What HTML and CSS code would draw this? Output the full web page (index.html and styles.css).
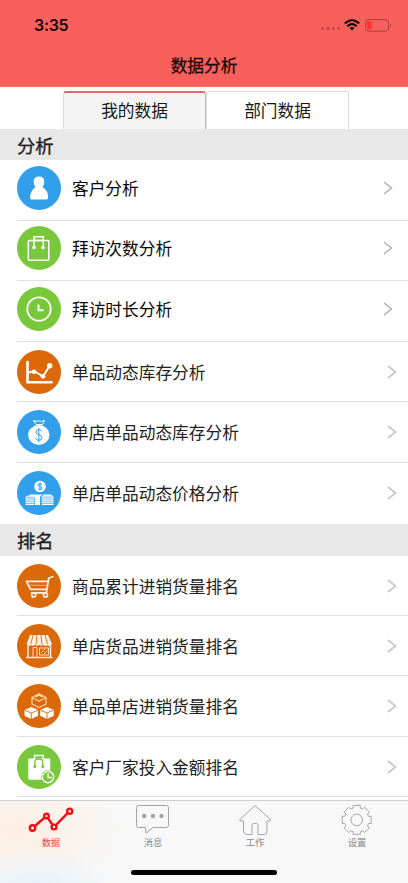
FILE: index.html
```html
<!DOCTYPE html>
<html lang="zh-CN">
<head>
<meta charset="utf-8">
<meta name="viewport" content="width=device-width, initial-scale=1">
<title>数据分析</title>
<link rel="stylesheet" href="styles.css">
</head>
<body>
<div class="app">
  <header class="header">
    <div class="status">
      <span class="time">3:35</span>
      <span class="signal"><i></i><i></i><i></i><i></i></span>
      <svg class="wifi" viewBox="0 0 16 12"><g fill="none" stroke="#180808" stroke-width="2.200"><path d="M.8 4.4Q8-2 15.2 4.4"/><path d="M3.300 7.200Q8 3 12.700 7.200"/></g><path d="M5.400 9Q8 7 10.600 9L8 11.600Z" fill="#180808"/></svg>
      <svg class="battery" viewBox="0 0 27 13"><rect x=".6" y=".6" width="23" height="11.6" rx="3.2" fill="none" stroke="#a94040"/><rect x="2.2" y="2.2" width="4.3" height="8.4" rx="1.4" fill="#ff3330"/><path d="M25 4.4q2 2 0 4z" fill="#a94040"/></svg>
    </div>
    <h1 class="title">数据分析</h1>
  </header>
  <nav class="tabs">
    <a class="tab tab-active">我的数据</a>
    <a class="tab">部门数据</a>
  </nav>
  <main class="content">
    <h2 class="section">分析</h2>
    <ul class="list">
      <li class="row row-high"><svg class="icon blue" viewBox="0 0 44 44"><path d="M22 10.500c3.500 0 5.200 1.700 5.200 5 0 2.600-.5 4.300-1.800 5.500 3 1.800 5.200 4.500 5.600 8.500.2 2.500 0 4-1.500 4h-15c-1.500 0-1.500-2-1.200-4 .6-4 2.700-6.700 5.400-8.500-1.500-1.200-2-3-2-5.500 0-3.300 1.800-5 5.300-5z" fill="#fff"/></svg><span class="label">客户分析</span><svg class="chevron" viewBox="0 0 10 14"><path d="M1 1l7.500 6L1 13"/></svg></li>
      <li class="row row-high"><svg class="icon green" viewBox="0 0 44 44"><g fill="none" stroke="#fff" stroke-width="1.500"><rect x="11.300" y="14.500" width="20.500" height="19.700" rx="1"/><path d="M17 21v-10.200h9.300V21M17 14.500h9.300"/></g><circle cx="17" cy="21.500" r="1.800" fill="#fff"/><circle cx="26" cy="21.500" r="1.800" fill="#fff"/></svg><span class="label">拜访次数分析</span><svg class="chevron" viewBox="0 0 10 14"><path d="M1 1l7.500 6L1 13"/></svg></li>
      <li class="row row-high"><svg class="icon green" viewBox="0 0 44 44"><g fill="none" stroke="#fff"><circle cx="22" cy="22" r="11.700" stroke-width="1.800"/><path d="M21.500 17.500v5.700H26.500" stroke-width="1.900"/></g></svg><span class="label">拜访时长分析</span><svg class="chevron" viewBox="0 0 10 14"><path d="M1 1l7.500 6L1 13"/></svg></li>
      <li class="row"><svg class="icon orange" viewBox="0 0 44 44"><g fill="none" stroke="#fff" stroke-width="2.600" stroke-linecap="round"><path d="M10.500 12v20.300H34.500"/><path d="M12 22.500l5-1.500 9 5.500L32.500 16" stroke-width="2"/></g><circle cx="17" cy="21.700" r="2.200" fill="#fff"/><circle cx="26" cy="26.300" r="2.400" fill="#fff"/><circle cx="32.700" cy="15.800" r="2.700" fill="#fff"/></svg><span class="label">单品动态库存分析</span><svg class="chevron soft" viewBox="0 0 10 14"><path d="M1 1l7.500 6L1 13"/></svg></li>
      <li class="row"><svg class="icon blue" viewBox="0 0 44 44"><ellipse cx="21.800" cy="25" rx="10.700" ry="10" fill="#fff"/><path d="M16.500 10.500l2.500 4h6.500l2-4q-2.500 1.500-5.500.5-3 1-5.500-.5z" fill="none" stroke="#fff"/><path d="M24.800 21.300q-1-1.700-3-1.700-3 0-3 2.500 0 2 3 2.700 3.200.7 3.200 3 0 2.500-3.200 2.500-2.500 0-3.300-2M21.800 18.200v14" fill="none" stroke="#319fea" stroke-width="1"/></svg><span class="label">单店单品动态库存分析</span><svg class="chevron soft" viewBox="0 0 10 14"><path d="M1 1l7.500 6L1 13"/></svg></li>
      <li class="row"><svg class="icon blue" viewBox="0 0 44 44"><circle cx="23" cy="15.500" r="5.800" fill="#fff"/><path d="M25 13.700q-.8-1-2-1-2 0-2 1.300t2 1.500q2 .3 2 1.700t-2 1.300q-1.500 0-2.200-1M23 11.500v8" fill="none" stroke="#319fea"/><path d="M8.500 26l5-2.600h7.500l-3.200 3V34h-9.300zM17.800 26.400q1-3 5-3h3.200q-3 1-3 3.500V34h-5.200zM26.500 23.400h7.500l2.600 2.600v8H24.500v-7q0-2 2-3.600z" fill="#fff"/><path d="M8 28h9.500M8 30.200h9.500M8 32.400h9.500M24.500 28H37M24.500 30.200H37M24.500 32.400H37M10 26.300l7-.1M25.500 26h10M17.600 26.500V34M24 26.500V34" fill="none" stroke="#319fea" stroke-width=".7"/></svg><span class="label">单店单品动态价格分析</span><svg class="chevron soft" viewBox="0 0 10 14"><path d="M1 1l7.500 6L1 13"/></svg></li>
    </ul>
    <h2 class="section">排名</h2>
    <ul class="list rank">
      <li class="row"><svg class="icon orange" viewBox="0 0 44 44"><g fill="none" stroke="#fff1e2" stroke-width="1.700" stroke-linejoin="round" stroke-linecap="round"><path d="M30.800 17.300H9.500L13.500 25.300H30M35.800 12.800l-4 1.200-2.500 14.800H14.500"/><path d="M12 21.300h18" stroke-width=".9" opacity=".6"/><circle cx="16.700" cy="31" r="2"/><circle cx="28.500" cy="31" r="2"/></g></svg><span class="label">商品累计进销货量排名</span><svg class="chevron soft" viewBox="0 0 10 14"><path d="M1 1l7.500 6L1 13"/></svg></li>
      <li class="row"><svg class="icon orange" viewBox="0 0 44 44"><path d="M13 11h18l3.800 8.500q0 2.500-2.500 2.500-1.500 0-2.200-1-2 2-4-.2-2 2-4 0-2 2-4 0-2 2-4 .2-1 1-2.300 1-2 0-2-2.500z" fill="#fff1e2"/><path d="M16.200 11l-2.500 9M20 11l-1 9.500M24 11l1 9.500M28 11l2.500 9" stroke="#dc6909" stroke-width=".9"/><path d="M11 22v11M33.500 22v11M9 33.500h26.500" fill="none" stroke="#ffe8d2" stroke-width="1.500"/><path d="M16 33v-9.500h4V33M22.500 24h9v7h-9zM24 29l4-4M27 30l3.500-3.500" fill="none" stroke="#ffdbb8" stroke-width="1"/></svg><span class="label">单店货品进销货量排名</span><svg class="chevron soft" viewBox="0 0 10 14"><path d="M1 1l7.500 6L1 13"/></svg></li>
      <li class="row"><svg class="icon orange" viewBox="0 0 44 44"><path d="M15 13.500L22 9.800l7 3.700V20L22 23.500 15 20zM15 13.500L22 17.300l7-3.800M18.500 13l3.500-1.800 3.500 1.800" fill="none" stroke="#ffd5a9" stroke-width="1.300" stroke-linejoin="round"/><path d="M7.500 26l6.800-3 6.800 3v5.700l-6.800 3.300-6.800-3.300zM23.200 26l6.800-3 6.800 3v5.700L30 35l-6.800-3.300z" fill="#fff"/><path d="M8 26.300l6.300 2.700 6.300-2.700M14.300 29v6M23.700 26.300L30 29l6.300-2.700M30 29v6" fill="none" stroke="#dc6909" stroke-width=".9"/></svg><span class="label">单品单店进销货量排名</span><svg class="chevron soft" viewBox="0 0 10 14"><path d="M1 1l7.500 6L1 13"/></svg></li>
      <li class="row"><svg class="icon green" viewBox="0 0 44 44"><path d="M12.500 13.500H32q1.300 0 1.300 1.300v20h-20.500q-1.500 0-1.500-1.500V14.800q0-1.300 1.200-1.300z" fill="#fff"/><path d="M17.500 14v-3.500h8.700V14" fill="none" stroke="#fff" stroke-width="1.400"/><path d="M17.800 21v-4q0-3 4-3t4 3v4" fill="none" stroke="#79c83b" stroke-width="1.400"/><circle cx="17.800" cy="21.500" r="1.600" fill="#79c83b"/><circle cx="25.800" cy="21.500" r="1.600" fill="#79c83b"/><circle cx="31" cy="32" r="7" fill="#79c83b"/><circle cx="31" cy="32" r="5.700" fill="none" stroke="#fff" stroke-width="1.400"/><path d="M31 28V32.500h4" fill="none" stroke="#fff" stroke-width="1.300"/></svg><span class="label">客户厂家投入金额排名</span><svg class="chevron soft" viewBox="0 0 10 14"><path d="M1 1l7.500 6L1 13"/></svg></li>
    </ul>
  </main>
  <footer class="footer">
    <nav class="bar">
      <a class="item item-active"><svg class="glyph" viewBox="0 0 46 32"><g fill="#fff" stroke="#f50d15" stroke-width="2.400"><path d="M4.500 24L18.500 12 26 23 41.500 7.200" fill="none"/><circle cx="4.500" cy="24" r="2.700"/><circle cx="18.500" cy="12" r="2.300"/><circle cx="26" cy="23" r="2.400"/><circle cx="41.700" cy="7.200" r="2.500"/></g></svg><span>数据</span></a>
      <a class="item"><svg class="glyph" viewBox="0 0 46 32"><path d="M8.500 1.500h28q2 0 2 2V21.500q0 2-2 2H23l-7 5.800-.5-5.800h-7q-2 0-2-2v-18q0-2 2-2z"/><g class="dots"><circle cx="14.200" cy="12" r="2.200"/><circle cx="23" cy="12" r="2.200"/><circle cx="31.500" cy="12" r="2.200"/></g></svg><span>消息</span></a>
      <a class="item"><svg class="glyph" viewBox="0 0 46 32"><path d="M23 1.500L38 15q1.500 2-.8 2H35v10.500q0 3-2.800 3H26v-9.500q0-1.500-1.500-1.500h-3q-1.500 0-1.500 1.500v9.500h-5q-3.500 0-3.500-3.500V17H9q-2.200 0-1-1.500z"/></svg><span>工作</span></a>
      <a class="item"><svg class="glyph" viewBox="0 0 46 32"><g transform="translate(22.700 15.900)"><path d="M-3.600-14.500H3.600V-11.800L5.800-10.900 8-12.600 12.600-8 10.900-5.800 11.800-3.600H14.500V3.600H11.800L10.900 5.800 12.600 8 8 12.600 5.800 10.900 3.600 11.800V14.500H-3.600V11.800L-5.800 10.900-8 12.600-12.600 8-10.900 5.800-11.800 3.600H-14.500V-3.600H-11.800L-10.900-5.800-12.600-8-8-12.600-5.800-10.900-3.600-11.800Z"/><circle r="5.800"/></g></svg><span>设置</span></a>
    </nav>
    <div class="home"></div>
  </footer>
</div>
</body>
</html>
```
FILE: styles.css
```css
* { box-sizing: border-box; }
body { margin: 0; font-family: "Noto Sans CJK SC", sans-serif; color: #222; background: #fff; }
h1, h2, ul { margin: 0; padding: 0; list-style: none; }
svg { display: block; flex: none; }
.app { width: 408px; height: 883px; display: flex; flex-direction: column; overflow: hidden; }
.header { height: 87px; flex: none; background: #f95f5b; border-bottom: 1px solid #f2726e; }
.status { height: 50px; display: flex; align-items: center; padding: 0 17px 0 34px; }
.time { font: 600 16px/20px Inter, sans-serif; letter-spacing: -.3px; color: #180808; margin-right: auto; }
.signal { display: flex; gap: 2px; margin: 7px 4px 0 0; }
.signal i { width: 3.200px; height: 3.200px; border-radius: 1px; background: #c84c49; }
.wifi { width: 16px; height: 12px; margin-right: 5px; }
.battery { width: 27px; height: 13px; margin-right: -1px; }
.title { font-size: 16.700px; line-height: 30px; font-weight: 400; -webkit-text-stroke: .3px; color: #180808; text-align: center; }
.tabs { height: 41.500px; flex: none; display: flex; justify-content: center; padding: 4px 0 0 4px; }
.tab { width: 143px; border: 1px solid #dadada; border-bottom: 0; border-radius: 3px 3px 0 0; text-align: center; font-size: 16.700px; line-height: 36px; color: #161616; }
.tab-active { background: #f4f4f4; border-top: 2px solid #dd6c6b; line-height: 35px; border-right-color: #c9b9b9; }
.content { flex: 1; min-height: 0; overflow: hidden; }
.section { height: 31.500px; background: #e8e8e8; padding-left: 17px; font-size: 18.300px; line-height: 32px; font-weight: 400; -webkit-text-stroke: .35px; }
.list { height: 364px; padding-left: 17px; }
.row { height: 60.550px; display: flex; align-items: center; border-bottom: 1px solid #e0e0e0; padding: 1px 11px 0 0; }
.row-high { padding: 0 15px 4px 0; }
.row:last-child { border-bottom-color: transparent; }
.rank { height: 245px; }
.rank .row { height: 60.400px; }
.rank .row:last-child { border-bottom-color: #e0e0e0; }
.icon { width: 44px; height: 44px; border-radius: 50%; }
.blue { background: #319fea; }
.green { background: #79c83b; }
.orange { background: #dc6909; }
.label { flex: 1; padding-left: 11px; font-size: 16.700px; line-height: 24px; }
.row-high .label { color: #090909; }
.chevron { width: 10px; height: 14px; fill: none; stroke: #aaa; stroke-width: 1.300; }
.soft { stroke: #c7c7cc; stroke-width: 1.700; }
.footer { height: 83px; flex: none; border-top: 1px solid #cfcfcf; background: radial-gradient(ellipse 75px 40px at 38px 88px, #e4f2fa, rgba(228, 242, 250, 0)), radial-gradient(ellipse 105px 60px at 18px 28px, #fdeee2, rgba(253, 238, 226, 0)), #f8f8f8; }
.bar { height: 69px; display: flex; padding-top: 3px; }
.item { flex: 1; display: flex; flex-direction: column; align-items: center; font-size: 9.300px; line-height: 12px; color: #8c8c8c; }
.item-active { color: #f83b43; }
.glyph { width: 46px; height: 32px; fill: none; stroke: #a5a5a5; stroke-width: 1; }
.dots { fill: #a5a5a5; stroke: none; }
.home { width: 146px; height: 5px; margin: 0 auto; border-radius: 3px; background: #000; }
```
